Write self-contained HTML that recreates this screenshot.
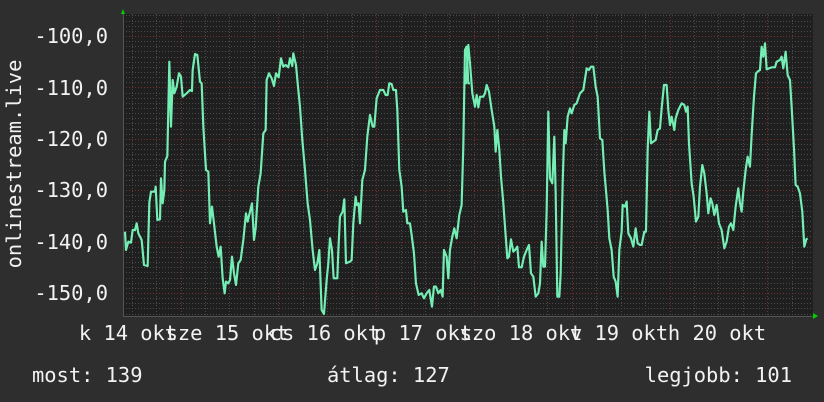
<!DOCTYPE html>
<html><head><meta charset="utf-8"><style>
html,body{margin:0;padding:0;background:#2e2e2e;width:824px;height:402px;overflow:hidden}
svg{display:block}
text{font-family:"DejaVu Sans Mono","Liberation Mono",monospace;font-size:20.4px;fill:#f2f2f2}
</style></head><body>
<svg width="824" height="402" viewBox="0 0 824 402">
<rect x="123" y="14" width="690" height="302" fill="#1f1f1f"/>
<g stroke="#4c4c4c" stroke-width="1" stroke-dasharray="1,2" id="g">
</g>
<script>
(function(){var s="http://www.w3.org/2000/svg",g=document.getElementById('g');
function L(x1,y1,x2,y2,c){var l=document.createElementNS(s,'line');l.setAttribute('x1',x1);l.setAttribute('y1',y1);l.setAttribute('x2',x2);l.setAttribute('y2',y2);if(c)l.setAttribute('stroke',c);g.appendChild(l);}
for(var i=-8;i<=60;i++){var y=36+i*5.14;if(y<15||y>315)continue;var r=(i%10==0);L(123,Math.round(y)+0.5,812,Math.round(y)+0.5,r?'#7a2f2f':null);}
for(var k=-3;k<30;k++){var x=180.5+k*24.45;if(x<124||x>812)continue;var r=(k%4==0);L(Math.round(x)+0.5,14,Math.round(x)+0.5,316,r?'#7a2f2f':null);}
})();
</script>
<line x1="123" y1="316.5" x2="814" y2="316.5" stroke="#555"/>
<line x1="123.5" y1="12" x2="123.5" y2="316" stroke="#555"/>
<polygon points="121,14 125,14 123,9" fill="#00d000"/>
<polygon points="813,313 813,319 818,316" fill="#00d000"/>
<g fill="none" stroke="#74eeb4" stroke-width="6.5" stroke-linejoin="round">
<polyline transform="translate(120,30) scale(0.3333)" points="15,605 18,660 25,635 33,638 38,600 45,600 50,580 55,610 65,630 72,705 83,708 88,518 93,485 105,485 107,470 112,570 120,568 123,445 128,520 133,480 135,395 142,378 148,95 153,290 158,150 163,190 170,170 177,130 183,140 188,200 200,190 210,180 216,183 218,120 225,72 232,75 240,155 245,160 250,290 258,420 265,425 270,580 276,530 282,580 290,650 296,680 302,650 308,745 314,790 318,755 325,760 330,750 336,680 342,730 348,765 355,700 362,690 370,630 378,550 383,575 390,545 396,520 402,630 407,595 415,470 422,430 430,310 437,300 440,150 447,130 455,145 462,168 468,130 476,142 483,85 490,110 497,105 505,112 510,85 517,108 520,70 528,105 535,180 540,230 547,330 555,420 563,520 570,570 578,660 585,720 592,700 598,660 605,840 612,852 620,750 625,700 630,625 636,660 641,745 652,745 655,665 660,560 668,545 673,508 678,700 690,695 695,690 700,580 707,500 710,525 716,520 720,580 727,450 735,420 742,320 750,255 758,290 763,290 770,205 780,180 790,180 797,195 803,195 808,160 815,162 820,180 828,180 832,240 838,420 845,470 850,545 858,540 862,580 870,580 875,615 882,670 888,760 896,795 905,790 912,805 920,790 928,780 936,830 942,770 948,770 955,790 962,780 968,800 972,660 980,680 985,745 990,660 997,620 1003,595 1010,625 1018,555 1025,525 1030,350 1035,60 1040,50 1045,160 1050,160"/>
<polyline transform="translate(465,30) scale(0.3333)" points="0,160 3,160 10,45 15,100 22,190 30,230 35,195 40,232 45,200 55,200 60,190 65,165 72,185 80,240 88,290 92,365 97,300 103,360 108,440 115,520 120,590 127,685 132,680 138,628 145,665 150,660 157,650 162,712 170,712 177,680 185,660 192,645 198,730 205,740 212,800 220,790 225,760 230,635 235,710 240,710 245,540 250,245 255,445 262,460 268,320 272,490 277,800 283,800 287,730 293,460 298,300 302,340 308,260 315,235 320,250 328,225 335,220 345,190 355,180 365,115 372,120 378,110 385,110 392,170 398,200 405,325 412,330 418,425 422,470 428,540 433,625 440,660 446,740 452,755 458,800 463,660 470,605 473,525 480,530 485,515 490,610 498,625 505,650 512,595 518,640 525,645 530,645 538,605 543,605 548,360 553,245 558,340 565,335 572,330 578,300 585,295 590,235 597,165 605,165 610,240 615,285 620,260 628,300 632,265 640,240 650,220 658,225 663,245 668,230 672,340 680,460 686,500 693,575 700,560 705,470 712,405 718,430 725,490 730,550 737,505 742,520 748,555 755,525 762,580 770,600 778,655 785,635 792,590 798,580 805,600 812,530 820,475 825,520 830,545 835,485 842,420 848,380 855,410 860,315 867,200 873,130 878,125 885,120 890,50 895,80 900,40 905,118 912,115 920,112 930,112 935,95 945,90 950,80 955,115 962,65 968,135 975,150 980,230 987,355 992,465 998,470 1005,490 1012,545 1018,650 1024,628 1028,625"/>
</g>
<g text-anchor="end">
<text x="108" y="43">-100,0</text>
<text x="108" y="95">-110,0</text>
<text x="108" y="146">-120,0</text>
<text x="108" y="197">-130,0</text>
<text x="108" y="249">-140,0</text>
<text x="108" y="300">-150,0</text>
</g>
<text transform="translate(21,164) rotate(-90)" text-anchor="middle">onlinestream.live</text>
<g text-anchor="middle">
<text x="128" y="340">k 14 okt</text>
<text x="227" y="340">sze 15 okt</text>
<text x="325" y="340">cs 16 okt</text>
<text x="423" y="340">p 17 okt</text>
<text x="521" y="340">szo 18 okt</text>
<text x="619" y="340">v 19 okt</text>
<text x="717" y="340">h 20 okt</text>
</g>
<text x="32" y="382">most: 139</text>
<text x="327" y="382">átlag: 127</text>
<text x="792" y="382" text-anchor="end">legjobb: 101</text>
</svg>
</body></html>
